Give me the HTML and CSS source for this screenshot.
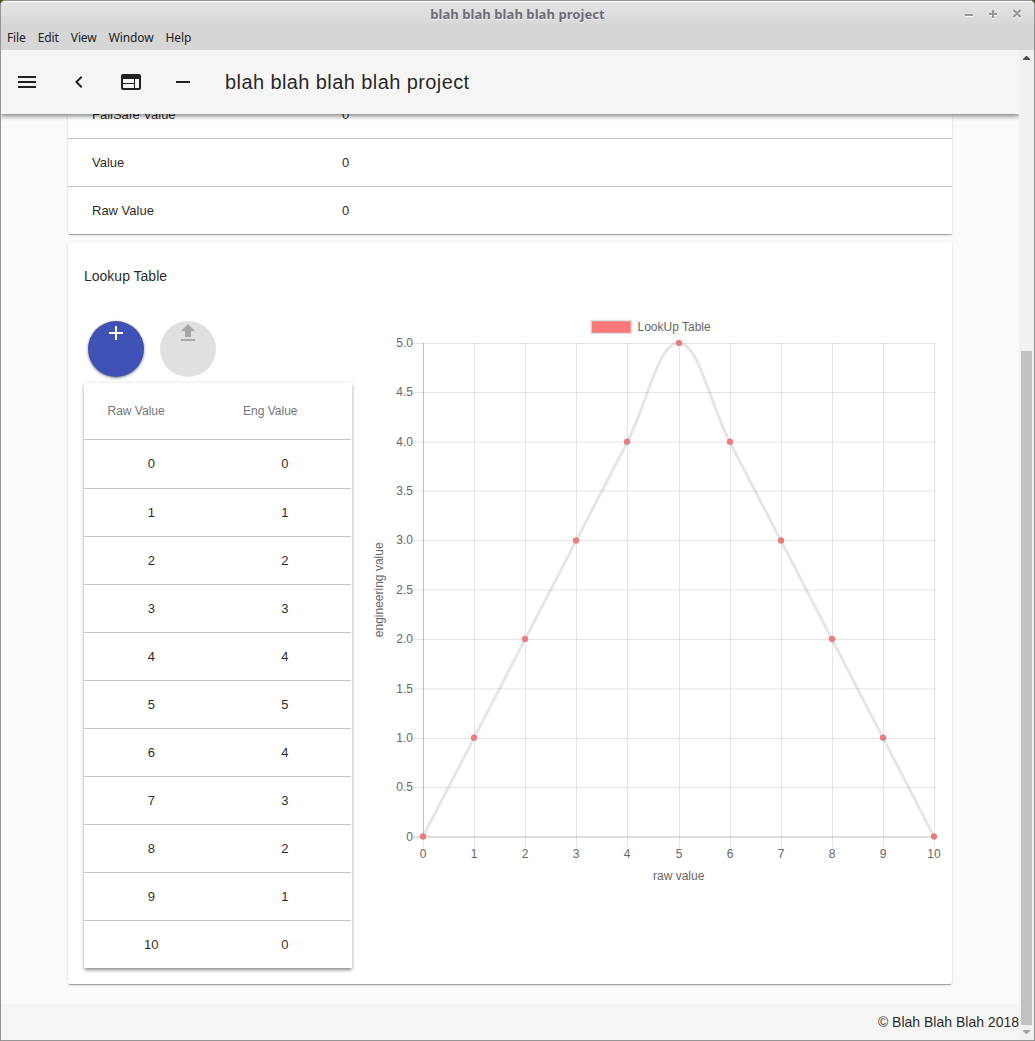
FILE: index.html
```html
<!DOCTYPE html>
<html lang="en">
<head>
<meta charset="utf-8">
<title>blah blah blah blah project</title>
<link rel="stylesheet" href="styles.css">
</head>
<body>
<div class="window">
  <div class="titlebar">
    <span class="titlebar-text">blah blah blah blah project</span>
    <svg class="window-controls" width="60" height="14" viewBox="0 0 60 14">
      <g class="control-glow" transform="translate(0 1)"><path d="M2 8h8M26 7h8M30 3v8M50.500 3l7 7M57.500 3l-7 7"/></g>
      <g class="control-marks"><path d="M2 8h8M26 7h8M30 3v8M50.500 3l7 7M57.500 3l-7 7"/></g>
    </svg>
  </div>
  <nav class="menubar">
    <span>File</span><span>Edit</span><span>View</span><span>Window</span><span>Help</span>
  </nav>
  <div class="viewport">
    <div class="page">
      <header class="toolbar">
        <div class="toolbar-icons">
          <svg width="24" height="24" viewBox="0 0 24 24"><path d="M3 18h18v-2H3v2zm0-5h18v-2H3v2zm0-7v2h18V6H3z"/></svg>
          <svg width="24" height="24" viewBox="0 0 24 24"><path d="M15.410 7.410 14 6l-6 6 6 6 1.410-1.410L10.830 12z"/></svg>
          <svg width="24" height="24" viewBox="0 0 24 24"><path d="M20 4H4c-1.100 0-1.990.900-1.990 2L2 18c0 1.100.900 2 2 2h16c1.100 0 2-.900 2-2V6c0-1.100-.900-2-2-2zm-5 14H4v-4h11v4zm0-5H4V9h11v4zm5 5h-4V9h4v9z"/></svg>
          <svg width="24" height="24" viewBox="0 0 24 24"><path d="M19 13H5v-2h14v2z"/></svg>
        </div>
        <h1>blah blah blah blah project</h1>
      </header>
      <main class="content">
        <section class="card properties">
          <div class="property"><span>FailSafe Value</span><span>0</span></div>
          <div class="property"><span>Value</span><span>0</span></div>
          <div class="property"><span>Raw Value</span><span>0</span></div>
        </section>
        <section class="card lookup">
          <h2>Lookup Table</h2>
          <div class="lookup-body">
            <div class="lookup-side">
              <div class="actions">
                <button class="fab primary" aria-label="Add"><svg width="24" height="24" viewBox="0 0 24 24"><path d="M19 13h-6v6h-2v-6H5v-2h6V5h2v6h6v2z"/></svg></button>
                <button class="fab" disabled aria-label="Upload"><svg width="24" height="24" viewBox="0 0 24 24"><path d="M9 16h6v-6h4l-7-7-7 7h4zm-4 2h14v2H5z"/></svg></button>
              </div>
              <div class="table">
                <div class="table-head"><span>Raw Value</span><span>Eng Value</span></div>
                <div class="table-row first"><span>0</span><span>0</span></div>
                <div class="table-row"><span>1</span><span>1</span></div>
                <div class="table-row"><span>2</span><span>2</span></div>
                <div class="table-row"><span>3</span><span>3</span></div>
                <div class="table-row"><span>4</span><span>4</span></div>
                <div class="table-row"><span>5</span><span>5</span></div>
                <div class="table-row"><span>6</span><span>4</span></div>
                <div class="table-row"><span>7</span><span>3</span></div>
                <div class="table-row"><span>8</span><span>2</span></div>
                <div class="table-row"><span>9</span><span>1</span></div>
                <div class="table-row"><span>10</span><span>0</span></div>
              </div>
            </div>
            <svg class="chart" width="576" height="580" viewBox="368 313 576 580">
              <rect class="legend-box" x="591" y="320.500" width="40.500" height="13"/>
              <text x="637.500" y="331">LookUp Table</text>
              <path class="grid" d="M413 343.500H935M413 392.500H935M413 442H935M413 491H935M413 540.500H935M413 590H935M413 639.500H935M413 688.800H935M413 738.500H935M413 787.500H935"/>
              <path class="grid" d="M474.500 343V847M525.500 343V847M576.500 343V847M627.500 343V847M679.500 343V847M730.500 343V847M781.500 343V847M832.500 343V847M883.500 343V847M934.500 343V847M423.500 837V847"/>
              <path class="axis" d="M423.500 343V837M413 837H935"/>
              <path class="curve" d="M423 836.500L627.400 441.700C647.800 402.200 658.100 343 678.500 343S709.200 402.200 729.700 441.700L934 836.500"/>
              <g class="points">
                <circle cx="423" cy="836.500" r="3"/><circle cx="474" cy="737.800" r="3"/><circle cx="525" cy="639.100" r="3"/><circle cx="576" cy="540.400" r="3"/><circle cx="627" cy="441.700" r="3"/><circle cx="679" cy="343" r="3"/><circle cx="730" cy="441.700" r="3"/><circle cx="781" cy="540.400" r="3"/><circle cx="832" cy="639.100" r="3"/><circle cx="883" cy="737.800" r="3"/><circle cx="934" cy="836.500" r="3"/>
              </g>
              <g text-anchor="end">
                <text x="413" y="347">5.0</text><text x="413" y="396">4.5</text><text x="413" y="446">4.0</text><text x="413" y="495">3.5</text><text x="413" y="544">3.0</text><text x="413" y="594">2.5</text><text x="413" y="643">2.0</text><text x="413" y="693">1.5</text><text x="413" y="742">1.0</text><text x="413" y="791">0.5</text><text x="413" y="841">0</text>
              </g>
              <g text-anchor="middle">
                <text x="423" y="858">0</text><text x="474" y="858">1</text><text x="525" y="858">2</text><text x="576" y="858">3</text><text x="627" y="858">4</text><text x="679" y="858">5</text><text x="730" y="858">6</text><text x="781" y="858">7</text><text x="832" y="858">8</text><text x="883" y="858">9</text><text x="934" y="858">10</text>
                <text x="678.700" y="880">raw value</text>
                <text transform="translate(383 589.800) rotate(-90)">engineering value</text>
              </g>
            </svg>
          </div>
        </section>
      </main>
      <footer class="footer">© Blah Blah Blah 2018</footer>
    </div>
    <div class="scrollbar">
      <svg width="7" height="4" viewBox="0 0 7 4"><path d="M3 0h1l3 3v1H0V3z" fill="#505050"/></svg>
      <div class="thumb"></div>
      <svg width="7" height="4" viewBox="0 0 7 4"><path d="M0 0h7v1L4 4H3L0 1z" fill="#a3a3a3"/></svg>
    </div>
  </div>
</div>
</body>
</html>
```
FILE: styles.css
```css
* { box-sizing: border-box; }

body {
  margin: 0;
  background: #3f5a12;
  font-family: "Liberation Sans", Arial, sans-serif;
  color: rgba(0, 0, 0, 0.87);
}

.window {
  display: flex;
  flex-direction: column;
  height: 1041px;
  border: 1px solid #959595;
  border-radius: 5px 5px 0 0;
  background: #d6d6d6;
  overflow: hidden;
}

.titlebar {
  display: grid;
  grid-template-columns: 1fr auto 1fr;
  align-items: center;
  height: 25px;
  flex: none;
  border-top: 1px solid #fff;
  background: linear-gradient(#e5e5e5, #d6d6d6);
  font: bold 13px/24px "Noto Sans", sans-serif;
}

.titlebar-text {
  grid-column: 2;
  color: #6c6b73;
  letter-spacing: 0.07px;
  text-shadow: 0 1px #f4f4f4;
}

.window-controls {
  justify-self: end;
  margin-right: 11px;
  fill: none;
  stroke-width: 2;
}

.control-glow { stroke: #fafafa; }
.control-marks { stroke: #959595; }

.menubar {
  display: flex;
  gap: 12px;
  height: 24px;
  flex: none;
  padding-left: 6px;
  font: 12px/23px "Noto Sans", sans-serif;
  letter-spacing: -0.11px;
  color: #212121;
}

.viewport {
  display: flex;
  flex: 1;
  min-height: 0;
}

.page {
  display: flex;
  flex-direction: column;
  width: 1018px;
  background: #fafafa;
}

.toolbar {
  position: relative;
  z-index: 1;
  display: flex;
  align-items: center;
  gap: 30px;
  flex: none;
  height: 64px;
  padding-left: 14px;
  background: #f5f5f5;
  box-shadow: 0 2px 5px rgba(0, 0, 0, 0.5);
  clip-path: inset(0 0 -10px 0);
}

.toolbar-icons {
  display: flex;
  gap: 28px;
  fill: #212121;
}

.toolbar h1 {
  margin: 0;
  font-size: 20px;
  font-weight: 400;
  letter-spacing: 0.41px;
}

.content {
  display: flex;
  flex-direction: column;
  gap: 8px;
  flex: 1;
  min-height: 0;
  padding: 0 67px;
  overflow: hidden;
}

.card {
  flex: none;
  background: #fff;
  border-radius: 2px;
  box-shadow: 0 2px 1px -1px rgba(0, 0, 0, 0.2), 0 1px 1px rgba(0, 0, 0, 0.14), 0 1px 3px rgba(0, 0, 0, 0.12);
}

.properties { margin-top: -24px; }

.property {
  display: grid;
  grid-template-columns: 250px 1fr;
  height: 48px;
  padding-left: 24px;
  border-top: 1px solid #c4c4c4;
  font-size: 13px;
  line-height: 47px;
}

.lookup {
  height: 742px;
  padding: 26px 8px 16px 16px;
}

.lookup h2 {
  margin: 0;
  font-size: 14px;
  font-weight: 400;
  line-height: 16px;
}

.lookup-body {
  display: flex;
  gap: 16px;
  padding-top: 29px;
}

.lookup-side { width: 268px; }

.actions {
  display: flex;
  gap: 16px;
  padding: 8px 4px 6px;
}

.fab {
  width: 56px;
  height: 56px;
  padding: 0;
  border: 0;
  border-radius: 50%;
  display: flex;
  justify-content: center;
  align-items: flex-start;
  background: #e0e0e0;
  fill: #a6a6a6;
}

.fab.primary {
  background: #3f51b5;
  fill: #fff;
  box-shadow: 0 1px 3px rgba(0, 0, 0, 0.5);
}

.table {
  padding-right: 1px;
  box-shadow: 0 3px 3px -1px rgba(0, 0, 0, 0.25), 0 2px 3px rgba(0, 0, 0, 0.14), 0 1px 5px rgba(0, 0, 0, 0.16);
}

.table-head,
.table-row {
  display: grid;
  grid-template-columns: 1fr 1fr;
}

.table-head {
  height: 56px;
  font-size: 12px;
  line-height: 56px;
  color: #757575;
}

.table-head span { padding-left: 23.5px; }
.table-head span + span { padding-left: 25.5px; }

.table-row {
  height: 48px;
  border-top: 1px solid #c4c4c4;
  font-size: 13px;
  line-height: 47px;
  text-align: center;
}

.table-row.first { height: 49px; }
.table-row span { padding-left: 1px; }

.chart { flex: none; }
.chart text { font-size: 12px; fill: #666; }

.grid, .axis, .curve { fill: none; }
.grid { stroke: rgba(0, 0, 0, 0.1); }
.axis { stroke: rgba(0, 0, 0, 0.25); }
.curve { stroke: rgba(0, 0, 0, 0.1); stroke-width: 3; }

.points circle { fill: #f97878; stroke: rgba(0, 0, 0, 0.1); }
.legend-box { fill: #f97878; stroke: #e2e2e2; stroke-width: 1.5; }

.footer {
  flex: none;
  height: 36px;
  background: #f5f5f5;
  font-size: 14px;
  line-height: 36px;
  text-align: right;
}

.scrollbar {
  display: flex;
  flex-direction: column;
  align-items: center;
  justify-content: space-between;
  width: 15px;
  padding: 6px 0 6px;
  background: #f1f1f1;
}

.thumb {
  width: 11px;
  height: 674px;
  margin-top: auto;
  margin-bottom: 5px;
  background: #c1c1c1;
}
```
